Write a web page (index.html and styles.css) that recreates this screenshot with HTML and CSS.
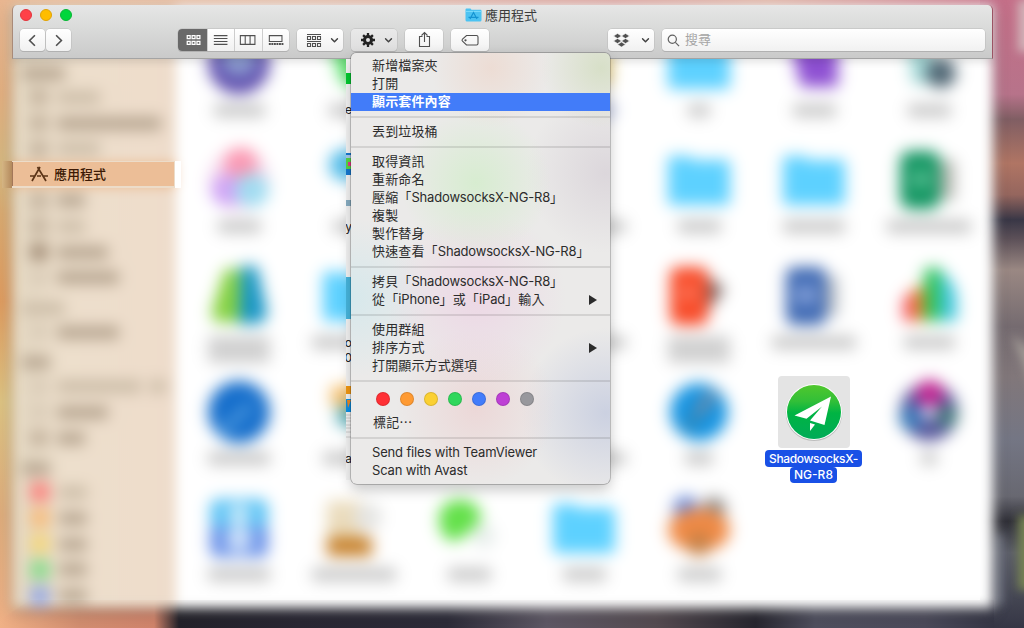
FILE: index.html
```html
<!DOCTYPE html>
<html lang="zh-Hant">
<head>
<meta charset="utf-8">
<title>應用程式</title>
<link rel="stylesheet" href="styles.css">
</head>
<body>
<svg width="0" height="0" class="defs">
  <defs>
    <linearGradient id="plane" x1="0" y1="0" x2="0" y2="1"><stop offset="0" stop-color="#50c72d"/><stop offset=".3" stop-color="#32bf38"/><stop offset=".52" stop-color="#00b443"/><stop offset="1" stop-color="#00ab58"/></linearGradient>
    <symbol id="folder" viewBox="0 0 64 64"><path fill="#5dd1ff" d="M1 10q0-2 2-2h19l5 4h34q2 0 2 2v40q0 3-3 3H4q-3 0-3-3z"/></symbol>
    <symbol id="chev" viewBox="0 0 8 6"><path d="M1 1.3l3 3 3-3" fill="none" stroke="#444" stroke-width="1.5" stroke-linecap="round" stroke-linejoin="round"/></symbol>
  </defs>
</svg>
<main class="desktop">
  <svg class="wallpaper" viewBox="0 0 1024 628">
    <defs>
      <linearGradient id="lf" x1="0" y1="0" x2="0" y2="1"><stop offset="0" stop-color="#eab791"/><stop offset=".15" stop-color="#e4b080"/><stop offset=".27" stop-color="#d6b980"/><stop offset=".34" stop-color="#dbaa70"/><stop offset=".48" stop-color="#e09c5f"/><stop offset=".64" stop-color="#dfc482"/><stop offset=".82" stop-color="#e0ad7c"/><stop offset="1" stop-color="#f0b186"/></linearGradient>
      <linearGradient id="tp" x1="0" y1="0" x2="1" y2="0"><stop offset="0" stop-color="#f0c09d"/><stop offset=".3" stop-color="#e5bda9"/><stop offset=".6" stop-color="#dca19c"/><stop offset=".75" stop-color="#e2b3a4"/><stop offset="1" stop-color="#c96e88"/></linearGradient>
      <linearGradient id="rt" x1="0" y1="0" x2="0" y2="1"><stop offset="0" stop-color="#c46f88"/><stop offset=".15" stop-color="#b7738a"/><stop offset=".19" stop-color="#805e63"/><stop offset=".26" stop-color="#b07564"/><stop offset=".31" stop-color="#95665e"/><stop offset=".35" stop-color="#393746"/><stop offset=".38" stop-color="#5c5058"/><stop offset=".43" stop-color="#9a8883"/><stop offset=".52" stop-color="#756b70"/><stop offset=".6" stop-color="#81777a"/><stop offset=".7" stop-color="#747684"/><stop offset=".79" stop-color="#686871"/><stop offset=".83" stop-color="#303038"/><stop offset=".88" stop-color="#5b5d67"/><stop offset="1" stop-color="#353645"/></linearGradient>
      <linearGradient id="bt" x1="0" y1="0" x2="1" y2="0"><stop offset="0" stop-color="#f0b186"/><stop offset=".08" stop-color="#d28e70"/><stop offset=".155" stop-color="#d0846b"/><stop offset=".18" stop-color="#23222a"/><stop offset=".3" stop-color="#292733"/><stop offset=".45" stop-color="#2c2b38"/><stop offset=".55" stop-color="#5e5865"/><stop offset=".66" stop-color="#554b51"/><stop offset=".76" stop-color="#27262f"/><stop offset=".82" stop-color="#4f4f5e"/><stop offset=".93" stop-color="#4b4a5a"/><stop offset="1" stop-color="#353645"/></linearGradient>
      <filter id="soft"><feGaussianBlur stdDeviation="5"/></filter>
    </defs>
    <rect width="1024" height="20" fill="url(#tp)"/>
    <rect width="30" height="628" fill="url(#lf)"/>
    <rect x="980" width="44" height="628" fill="url(#rt)"/>
    <path fill="url(#bt)" d="M0 628v-8l30-20h964v28z"/>
    <g filter="url(#soft)">
      <path d="M1018 0h20v52h-20z" fill="#d1b2b7"/>
      <path d="M1018 515h20v75h-20z" fill="#768253"/>
      <path d="M1012 335l25 20v45z" fill="#a39b96"/>
      <path d="M995 535h8v70h-8z" fill="#6d7180"/>
    </g>
  </svg>

  <section class="window">
    <div class="body">
      <aside class="sidebar">
        <div class="head"><i class="bar w40"></i></div>
        <div class="row"><b></b><i class="bar faint w40"></i></div>
        <div class="row"><b></b><i class="bar w100"></i></div>
        <div class="row"><b></b><i class="bar faint w40"></i></div>
        <div class="row active"></div>
        <div class="row"><b></b><i class="bar w25"></i></div>
        <div class="row"><b></b><i class="bar faint w25"></i></div>
        <div class="row"><b class="dark"></b><i class="bar w50"></i></div>
        <div class="row"><b class="light"></b><i class="bar w60"></i></div>
        <div class="head"><i class="bar faint w40"></i></div>
        <div class="row"><b class="light"></b><i class="bar w60"></i></div>
        <div class="head"><i class="bar w25"></i></div>
        <div class="row"><b class="light"></b><i class="bar faint w80"></i><i class="bar faint w10"></i></div>
        <div class="row"><b class="light"></b><i class="bar w50"></i></div>
        <div class="row"><b></b><i class="bar w25"></i></div>
        <div class="head"><i class="bar w25"></i></div>
        <div class="row"><b class="tag red"></b><i class="bar faint w25"></i></div>
        <div class="row"><b class="tag orange"></b><i class="bar w25"></i></div>
        <div class="row"><b class="tag yellow"></b><i class="bar w25"></i></div>
        <div class="row"><b class="tag green"></b><i class="bar w25"></i></div>
        <div class="row"><b class="tag blue"></b><i class="bar w25"></i></div>
      </aside>
      <div class="apps">
        <figure><svg viewBox="0 0 64 64"><circle cx="32" cy="31" r="31" fill="#5d4cad"/><circle cx="32" cy="27" r="18" fill="#8b9bce"/></svg><i class="bar w50"></i></figure>
        <figure><svg viewBox="0 0 64 64"><path fill="#61e273" d="M5 5h54v48H20z"/></svg><i class="bar w50"></i></figure>
        <figure></figure>
        <figure><svg viewBox="0 0 64 64"><path fill="#f2d888" d="M32 14h28v38H32z"/></svg><i class="bar w60 bluish"></i></figure>
        <figure><svg><use href="#folder"/></svg><i class="bar w20"></i></figure>
        <figure><svg viewBox="0 0 64 64"><path fill="#8d4fd2" d="M8 10h48v45H19l-6-24z"/></svg><i class="bar w40"></i></figure>
        <figure><svg viewBox="0 0 64 64"><path fill="#a5dad8" d="M10 8h25v44H15z"/><circle cx="44" cy="41" r="15" fill="#4b6270"/></svg><i class="bar w40"></i></figure>

        <figure><svg viewBox="0 0 64 64"><circle cx="32" cy="32" r="31" fill="#f7dff0"/><circle cx="34" cy="16" r="17" fill="#fb98b2"/><circle cx="20" cy="42" r="16" fill="#cfa4f5"/><circle cx="45" cy="42" r="17" fill="#a0dcf1"/></svg><i class="bar w40"></i></figure>
        <figure><svg viewBox="0 0 64 64"><circle cx="23" cy="17" r="16" fill="#54bde9"/></svg><i class="bar w40"></i></figure>
        <figure></figure>
        <figure><svg></svg><i class="bar w80"></i></figure>
        <figure><svg><use href="#folder"/></svg><i class="bar w40"></i></figure>
        <figure><svg><use href="#folder"/></svg><i class="bar w60"></i></figure>
        <figure><svg viewBox="0 0 64 64"><path fill="#b9b9b3" d="M35 12h23v40H35z"/><rect x="3" y="3" width="40" height="58" rx="10" fill="#109460"/><circle cx="24" cy="31" r="10" fill="#55bd90"/></svg><i class="bar w80"></i></figure>

        <figure><svg viewBox="0 0 64 64"><path fill="#86d240" d="M18 5h15v53H12q-9 0-7-12z"/><path fill="#1795c5" d="M34 2h16l10 46q0 12-14 12H32z"/></svg><i class="bar two w60"></i></figure>
        <figure><svg><use href="#folder"/></svg><i class="bar w80"></i></figure>
        <figure></figure>
        <figure><svg></svg><i class="bar w80"></i></figure>
        <figure><svg viewBox="0 0 64 64"><path fill="#77625f" d="M40 12l18 13-18 23z"/><rect x="3" y="3" width="38" height="58" rx="8" fill="#f84a27"/><circle cx="22" cy="29" r="9" fill="#fb755a"/></svg><i class="bar two w60"></i></figure>
        <figure><svg viewBox="0 0 64 64"><path fill="#b9bec4" d="M40 12h16v40H40z"/><rect x="4" y="3" width="40" height="58" rx="8" fill="#3c67b2"/><circle cx="24" cy="31" r="11" fill="#84a0d8"/></svg><i class="bar w80"></i></figure>
        <figure><svg viewBox="0 0 64 64"><path fill="#f55560" d="M6 57V35l12-10v32z"/><path fill="#e78a24" d="M18 57V23h9v34z"/><path fill="#2fc458" d="M27 57V5l16-2v54z"/><path fill="#3fc5dd" d="M43 57V6q17 13 17 32v19z"/></svg><i class="bar w50"></i></figure>

        <figure><svg viewBox="0 0 64 64"><circle cx="32" cy="32" r="31" fill="#146dcb"/><path d="M14 52l30-27" stroke="#4d99de" stroke-width="9"/></svg><i class="bar w60"></i></figure>
        <figure><svg viewBox="0 0 64 64"><path fill="#f4bd69" d="M9 6h30v20H9z"/><path fill="#59afba" d="M15 26h30v20H15z"/></svg><i class="bar w60"></i></figure>
        <figure></figure>
        <figure><svg></svg><i class="bar w80"></i></figure>
        <figure><svg viewBox="0 0 64 64"><circle cx="32" cy="32" r="29" fill="#1594e2"/><path d="M30 34l17-22" stroke="#6f8aa6" stroke-width="11"/><path d="M32 33L19 50" stroke="#3c85ac" stroke-width="8"/></svg><i class="bar w25"></i></figure>
        <figure></figure>
        <figure><svg viewBox="0 0 64 64"><circle cx="32" cy="32" r="29" fill="#55549a"/><circle cx="33" cy="14" r="14" fill="#c0208f"/><circle cx="14" cy="38" r="12" fill="#3478b8"/><circle cx="50" cy="36" r="11" fill="#3c7777"/><circle cx="32" cy="32" r="8" fill="#ddd3ef"/></svg><i class="bar w10"></i></figure>

        <figure><svg viewBox="0 0 64 64"><rect x="3" y="3" width="58" height="29" rx="8" fill="#5bc3f5"/><path fill="#6890e8" d="M3 31h58v23q0 7-7 7H10q-7 0-7-7z"/><circle cx="32" cy="19" r="11" fill="#c9eafa"/><circle cx="32" cy="43" r="13" fill="#cfe1fa"/></svg><i class="bar w60"></i></figure>
        <figure><svg viewBox="0 0 64 64"><path fill="#eadbbb" d="M5 5h34v38H5z"/><circle cx="46" cy="21" r="14" fill="#e4e4e2"/><path fill="#c67f28" d="M5 41h45v19H5z"/></svg><i class="bar w80"></i></figure>
        <figure><svg viewBox="0 0 64 64"><circle cx="47" cy="40" r="12" fill="#e8eeec"/><path d="M2 23a21 18 0 0 1 42-3q0 9-14 17-5 8-16 8Q2 40 2 23z" fill="#62e048"/></svg><i class="bar w40"></i></figure>
        <figure><svg><use href="#folder"/></svg><i class="bar w40"></i></figure>
        <figure><svg viewBox="0 0 64 64"><circle cx="19" cy="13" r="13" fill="#6488dc"/><circle cx="47" cy="13" r="12" fill="#8a8a8a"/><ellipse cx="32" cy="34" rx="31" ry="22" fill="#f08a45"/><circle cx="32" cy="48" r="12" fill="#c58045"/></svg><i class="bar w40"></i></figure>
      </div>
    </div>

    <header class="toolbar">
      <div class="titlebar">
        <div class="lights"><i class="close"></i><i class="min"></i><i class="max"></i></div>
        <div class="title">
          <svg width="17" height="14" viewBox="0 0 17 14"><path fill="#4cc3f2" d="M.5 1.500Q.5.5 1.500.5h4l1 1.300h9q1 0 1 1V12q0 1.500-1.500 1.500H2Q.5 13.500.5 12z"/><path d="M.5 3.500h16" stroke="#79dafb"/><path d="M5 11l3.500-6.500L12 11M3.500 9.300h10" fill="none" stroke="#1594d2" stroke-width="1.200"/></svg>
          <span>應用程式</span>
        </div>
      </div>
      <div class="tools">
        <div class="btn nav"><svg viewBox="0 0 26 23"><path d="M15.500 6l-5.500 5.500 5.500 5.500"/></svg></div>
        <div class="btn nav fwd"><svg viewBox="0 0 26 23"><path d="M10.500 6l5.500 5.500-5.500 5.500"/></svg></div>
        <div class="segments">
          <div class="on"><svg viewBox="0 0 30 23"><path d="M9.500 6.500h3v3h-3zM14.500 6.500h3v3h-3zM19.500 6.500h3v3h-3zM9.500 12.500h3v3h-3zM14.500 12.500h3v3h-3zM19.500 12.500h3v3h-3z"/></svg></div>
          <div><svg viewBox="0 0 27 23"><path d="M6 6.500h14M6 9.500h14M6 12.500h14M6 15.500h14"/></svg></div>
          <div><svg viewBox="0 0 27 23"><path d="M5.500 6.500h15v9h-15zM10.500 6.500v9M15.500 6.500v9"/></svg></div>
          <div><svg viewBox="0 0 27 23"><path d="M6.500 6.500h13v6h-13z"/><path d="M6 15h15" stroke-width="2" stroke-dasharray="2 .6"/></svg></div>
        </div>
        <div class="btn arrange"><svg viewBox="0 0 46 23"><path d="M10 5.500h14M10 12.500h14M10.500 7.500h3v3h-3zM15.500 7.500h3v3h-3zM20.500 7.500h3v3h-3zM10.500 14.500h3v3h-3zM15.500 14.500h3v3h-3zM20.500 14.500h3v3h-3z"/><use href="#chev" x="33.500" y="8.500" width="8" height="6"/></svg></div>
        <div class="btn gear"><svg viewBox="0 0 46 23"><g class="cog" transform="translate(17 11)"><circle r="3.500" stroke-width="3"/><path stroke-width="2.300" d="M0-7v3M0 7v-3M-7 0h3M7 0h-3M-4.900-4.900l2 2M4.900 4.900l-2-2M-4.900 4.900l2-2M4.900-4.900l-2 2"/></g><use href="#chev" x="33.500" y="8.500" width="8" height="6"/></svg></div>
        <div class="btn share"><svg viewBox="0 0 38 23"><path d="M17.500 7.500h-3v10h10v-10h-3M19.500 13V3.500M16.500 6.500l3-3 3 3"/></svg></div>
        <div class="btn tags"><svg viewBox="0 0 38 23"><path d="M15.500 6.500h10q1.500 0 1.500 1.500v6.500q0 1.500-1.500 1.500h-10l-4-3.800q-1-1 0-2z"/><circle cx="14.500" cy="11.300" r=".6"/></svg></div>
        <div class="btn dropbox"><svg viewBox="0 0 46 23"><path class="solid" d="M5.500 7l4-2.500 4 2.500-4 2.500zM13.500 7l4-2.500 4 2.500-4 2.500zM5.500 12l4-2.500 4 2.500-4 2.500zM13.500 12l4-2.500 4 2.500-4 2.500zM9.500 15.500l4-2.500 4 2.500-4 2.500z"/><use href="#chev" x="33.500" y="8.500" width="8" height="6"/></svg></div>
        <div class="search"><svg viewBox="0 0 14 14"><circle cx="5.700" cy="5.700" r="4.400"/><path d="M9 9l4 4"/></svg><span>搜尋</span></div>
      </div>
    </header>
  </section>

  <div class="current">
    <div class="inner"><svg width="20" height="18" viewBox="0 0 20 18"><path d="M3 16L11 2M8.500 2L17 16M1 11h5M8 11h4M14.500 11H19" fill="none" stroke="#5b3417" stroke-width="1.700"/></svg><span>應用程式</span></div>
  </div>

  <div class="selected">
    <div class="tile">
      <svg width="60" height="60" viewBox="0 0 60 60"><circle cx="30" cy="30.800" r="28.300" fill="#bdbdbd"/><circle cx="30" cy="30" r="28" fill="#fff"/><circle cx="30" cy="30" r="27" fill="url(#plane)"/><path d="M10.500 33.500L47 14.500 40.500 43 26 38.500 38 24.500 22.500 36.800z" fill="#fff"/><path d="M26 41l5 1.500-5 6.500z" fill="#fff"/></svg>
    </div>
    <div class="name"><span>ShadowsocksX-</span><span>NG-R8</span></div>
  </div>

  <div class="sliver">
    <svg width="5" height="421" viewBox="0 0 5 421"><path fill="#f5f5f5" d="M0 0h5v421H0z"/><path fill="#03cb31" d="M0 14h5v11H0z"/><path fill="#1679d1" d="M0 94h5v22H0z"/><path fill="#a9cbec" d="M0 96h5v3H0z"/><path fill="#57d748" d="M0 99h5v11H0z"/><path fill="#e93a8a" d="M2 103h3v4H2z"/><path fill="#89aec3" d="M0 141h5v6H0z"/><path fill="#47b7df" d="M0 218h5v42H0z"/><path fill="#f39913" d="M0 327h5v8H0z"/><path fill="#0a91e8" d="M0 340h5v13H0z"/><path fill="#ef8922" d="M1 341h4l-3 8z"/><path stroke="#ccc" d="M0 356h5M0 359h5M0 362h5M0 366h5M0 369h5M0 373h5M0 378h5"/></svg>
    <span class="s1">e</span><span class="s2">y</span><span class="s3">o</span><span class="s4">:0</span><span class="s5">a</span>
  </div>

  <nav class="menu">
    <div class="item">新增檔案夾</div>
    <div class="item">打開</div>
    <div class="item hl">顯示套件內容</div>
    <hr>
    <div class="item">丟到垃圾桶</div>
    <hr>
    <div class="item">取得資訊</div>
    <div class="item">重新命名</div>
    <div class="item">壓縮「<span class="app">ShadowsocksX-NG-R8</span>」</div>
    <div class="item">複製</div>
    <div class="item">製作替身</div>
    <div class="item">快速查看「<span class="app">ShadowsocksX-NG-R8</span>」</div>
    <hr>
    <div class="item">拷貝「<span class="app">ShadowsocksX-NG-R8</span>」</div>
    <div class="item sub">從「<span>iPhone</span>」或「<span>iPad</span>」輸入</div>
    <hr>
    <div class="item">使用群組</div>
    <div class="item sub">排序方式</div>
    <div class="item">打開顯示方式選項</div>
    <hr>
    <div class="dots"><i class="red"></i><i class="orange"></i><i class="yellow"></i><i class="green"></i><i class="blue"></i><i class="purple"></i><i class="gray"></i></div>
    <div class="item labels">標記⋯</div>
    <hr>
    <div class="item"><span>Send files with TeamViewer</span></div>
    <div class="item"><span>Scan with Avast</span></div>
  </nav>
</main>
</body>
</html>
```
FILE: styles.css
```css
* { box-sizing: border-box; }
body { margin: 0; font: 13px/18px Inter, "Noto Sans CJK TC", sans-serif; color: #2c2c2c; }
.defs { position: absolute; }
.desktop { position: relative; width: 1024px; height: 628px; overflow: hidden; display: flow-root; }
.wallpaper { position: absolute; inset: 0; width: 1024px; height: 628px; }

/* window: the file area and the toolbar share one grid cell */
.window { position: relative; margin: 5px 31px 0 12px; height: 603px; display: grid; grid-template-rows: 53px 1fr; }
.body { grid-area: 1 / 1 / 3 / 2; display: flex; height: 603px; filter: blur(6px); background: #fff; box-shadow: 0 3px 10px rgba(0, 0, 0, .4); }
.toolbar { grid-area: 1 / 1 / 2 / 2; position: relative; height: 54px; border-radius: 5px 5px 0 0; border-bottom: 1px solid #a4a4a4; border-left: 1px solid #a98a78; border-right: 1px solid #9c5364; background: linear-gradient(#e6e6e6, #d9dad9 45%, #cacaca); box-shadow: 0 3px 9px rgba(0, 0, 0, .12); }

.bar { display: block; height: 13px; border-radius: 3px; background: #c6c6c6; }
.bluish { background: #b3bce0; }
.w10 { width: 16px; } .w20 { width: 22px; } .w25 { width: 28px; } .w40 { width: 43px; } .w50 { width: 51px; } .w60 { width: 62px; } .w80 { width: 84px; } .w100 { width: 104px; }
.bar.two { height: 27px; background: #d0d0d0; }

.sidebar { width: 164px; padding: 51px 0 0 10px; background: linear-gradient(90deg, #e4d8c2, #eddfcc 30%, #eedccb); }
.sidebar .head { height: 28.500px; padding-top: 11px; }
.sidebar .row { height: 25.800px; display: flex; align-items: center; gap: 9px; padding-left: 8px; }
.sidebar .bar { background: #b5a48f; }
.sidebar .faint { background: #cbbca7; }
.sidebar b { width: 18px; height: 16px; background: #c1b09b; border-radius: 4px; }
.sidebar .bar, .sidebar b { filter: blur(5px); }
.sidebar b.dark { background: #a38e78; height: 18px; }
.sidebar b.light { background: #d8cab6; }
.sidebar b.tag { width: 20px; height: 20px; }
.sidebar b.red { background: #fa8580; } .sidebar b.orange { background: #f6bd7e; } .sidebar b.yellow { background: #f2d67e; } .sidebar b.green { background: #89db8d; } .sidebar b.blue { background: #97aae4; }
.sidebar .active { background: #ecbe97; margin-left: -10px; }

.apps { padding: 27px 0 0 5.500px; display: grid; grid-template-columns: repeat(7, 115px); grid-auto-rows: 116px; align-content: start; }
.apps figure { margin: 0; display: flex; flex-direction: column; align-items: center; gap: 8px; filter: blur(5.500px); }
.apps svg { width: 64px; height: 64px; flex: none; }

.titlebar { height: 21px; display: grid; align-items: center; }
.titlebar > * { grid-area: 1 / 1; }
.lights { display: flex; gap: 8px; padding: 0 0 1px 7px; }
.lights i { width: 12px; height: 12px; border-radius: 50%; border: 1px solid; }
.lights .close { background: #ff4048; border-color: #e2353c; } .lights .min { background: #ffbd00; border-color: #e0a205; } .lights .max { background: #00d63c; border-color: #08b634; }
.title { display: flex; align-items: center; gap: 3px; padding: 0 0 2px 452px; color: #3c3c3c; }
.tools { display: flex; align-items: center; padding: 3px 7px 0 7px; }
.btn, .segments, .search { height: 22px; border-radius: 4px; background: linear-gradient(#fff, #f1f1f1); box-shadow: 0 0 0 .5px #bababa, 0 1px 0 #a9a9a9; }
.btn svg, .segments svg { display: block; width: 100%; height: 23px; fill: none; stroke: #505050; stroke-width: 1.100; }
.btn.nav svg { stroke-width: 1.700; }
.nav { width: 25px; }
.fwd { margin-left: 1px; }
.segments { width: 111px; margin-left: 107px; display: flex; overflow: hidden; }
.segments div { flex: 27; border-left: 1px solid #cdcdcd; }
.segments .on { flex: 30; background: #696969; border: 0; }
.segments .on svg { stroke: #fff; stroke-width: 1.300; }
.arrange { width: 46px; margin-left: 8px; }
.gear { width: 46px; margin-left: 8px; background: linear-gradient(#e9e9e9, #dedede); }
.cog { stroke: #232323; }
.share { width: 38px; margin-left: 8px; }
.tags { width: 38px; margin-left: 8px; }
.dropbox { width: 46px; margin-left: 119px; }
.dropbox .solid { fill: #505050; stroke: #f8f8f8; stroke-width: .6; }
.search { flex: 1; margin-left: 8px; display: flex; align-items: center; gap: 5px; padding-left: 5px; color: #a5a5a5; }
.search svg { width: 13px; height: 13px; fill: none; stroke: #606060; stroke-width: 1.300; }
.search span { line-height: 16px; padding-bottom: 2px; }

.current { position: absolute; left: 2px; top: 161px; width: 179px; height: 27px; padding: 0 6px 0 10px; background: linear-gradient(90deg, #d5b583, #b3895d 10px, #fff 10px); }
.current .inner { height: 27px; display: flex; align-items: center; gap: 5px; padding-left: 17px; border: solid #ecdcc9; border-width: 1px 1px 2px 0; box-shadow: inset 1px 0 #a37759; background: #ecbe97; color: #3c1a05; font-weight: 500; }

.selected { position: absolute; left: 764px; top: 376px; width: 99px; display: flex; flex-direction: column; align-items: center; gap: 2px; }
.tile { width: 72px; height: 72px; display: grid; place-items: center; border-radius: 4px; background: #e4e4e4; }
.name { display: flex; flex-direction: column; align-items: center; color: #fff; font-size: 12px; line-height: 17px; font-weight: 500; }
.name span { height: 17px; padding: 0 4px; border-radius: 4px; background: #1950e6; white-space: nowrap; letter-spacing: -.35px; }
.name span + span { height: 16px; line-height: 15px; letter-spacing: 0; }

.sliver { position: absolute; left: 346px; top: 59px; width: 5px; height: 421px; overflow: hidden; }
.sliver span { position: absolute; right: -1px; font-size: 12px; color: #222; }
.s1 { top: 42px; } .s2 { top: 159px; } .s3 { top: 275px; } .s4 { top: 290px; } .s5 { top: 391px; }

.menu { position: absolute; left: 351px; top: 53px; width: 259px; height: 431px; padding-top: 4px; border-radius: 5px 5px 6px 6px; box-shadow: 0 0 0 .7px rgba(0, 0, 0, .28), 0 6px 14px rgba(0, 0, 0, .22);
  background:
    radial-gradient(circle at 125px 130px, rgba(210, 237, 202, .8), transparent 75px),
    radial-gradient(circle at 125px 245px, rgba(237, 211, 228, .8), transparent 90px),
    radial-gradient(circle at 125px 355px, rgba(236, 211, 211, .8), transparent 80px),
    radial-gradient(circle at 255px 360px, rgba(200, 206, 224, .9), transparent 85px),
    radial-gradient(circle at 140px 15px, rgba(237, 217, 207, .8), transparent 60px),
    radial-gradient(circle at 250px 15px, rgba(213, 222, 196, .9), transparent 60px),
    radial-gradient(circle at 255px 120px, rgba(216, 210, 216, .8), transparent 80px),
    radial-gradient(circle at 0 245px, rgba(212, 232, 236, .9), transparent 80px),
    #ebeae9; }
.item { height: 18px; padding-left: 21px; line-height: 17px; letter-spacing: .15px; white-space: nowrap; }
.item span { letter-spacing: -.16px; }
.item .app { letter-spacing: -.18px; }
.hl { background: #427cf9; color: #fff; font-weight: 700; }
.menu hr { margin: 0; border: solid transparent; border-width: 5px 0; height: 12px; background: rgba(0, 0, 0, .1); background-clip: padding-box; }
.sub { display: flex; align-items: flex-start; }
.sub::after { content: ""; margin: 4px 13px 0 auto; border-left: 8px solid #2b2b2b; border-top: 5px solid transparent; border-bottom: 5px solid transparent; }
.dots { height: 27px; padding: 5px 0 0 25px; display: flex; gap: 10px; }
.dots i { width: 14px; height: 14px; border-radius: 50%; border: 1px solid rgba(0, 0, 0, .12); }
.dots .red { background: #ff3035; } .dots .orange { background: #ff9a32; } .dots .yellow { background: #fbd033; } .dots .green { background: #30d75c; } .dots .blue { background: #427cfb; } .dots .purple { background: #be40d5; } .dots .gray { background: #98989d; }
.labels { padding-left: 22px; }
```
